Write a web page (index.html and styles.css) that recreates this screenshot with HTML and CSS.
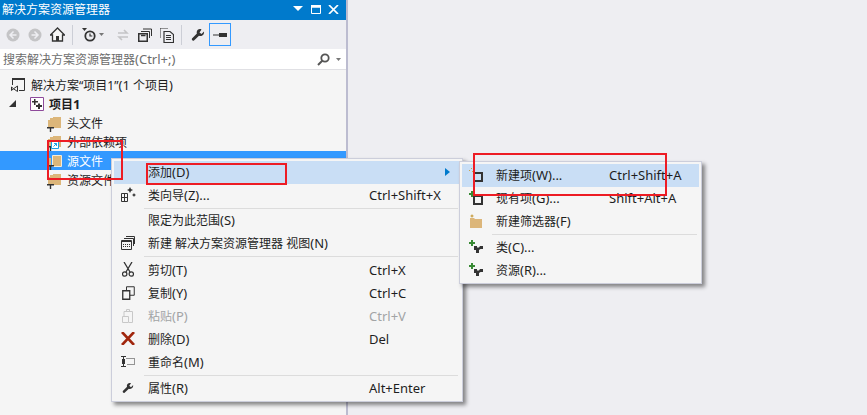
FILE: index.html
```html
<!DOCTYPE html>
<html lang="zh-CN">
<head>
    <meta charset="UTF-8">
    <title>解决方案资源管理器</title>
    <link rel="stylesheet" href="styles.css">
</head>
<body>
    <svg class="defs" width="0" height="0">
        <symbol id="folder" viewBox="0 0 14 12">
            <path d="M0 3h2V1h2v2h0V1h9v10H0z" fill="#dcb67a"/>
            <path d="M5 0h8v11H5V2z" fill="#dcb67a"/>
        </symbol>
        <symbol id="folder-open" viewBox="0 0 14 12">
            <path d="M0 3h3v8H0z" fill="#dcb67a"/>
            <path d="M4.500.5h9v11h-9z" fill="#dcb67a" stroke="#f5ecd9"/>
        </symbol>
        <symbol id="down" viewBox="0 0 7 5">
            <path d="M0 0h7v1.500H4.200V5H2.800V1.500H0z" fill="#333"/>
        </symbol>
        <symbol id="wrench" viewBox="0 0 14 14">
            <path d="M13 3.500 10.500 6 8.500 4.500 10.500 1.500C8.500.500 6 1.500 5.700 4c0 .6 0 1 .2 1.500L1 10.500c-.8 1 .8 2.800 2 2L8 7.800c2.800 1 5.500-1 5-4.300z" fill="#333"/>
        </symbol>
        <symbol id="newclass" viewBox="0 0 14 14">
            <path d="M0 2h2V0h2v2h2v2H4v2H2V4H0z" fill="#388a34"/>
            <path d="M5 6h3v1.500h2L11 6h3v3h-2.500L10 10v3H7v-3H5z" fill="#333"/>
        </symbol>
    </svg>

    <div class="page">
        <aside class="panel">
            <div class="titlebar">
                <span class="title">解决方案资源管理器</span>
                <span class="grip"></span>
                <svg class="tb-arrow" width="10" height="6" viewBox="0 0 10 6"><path d="M0 0h10L5 5z" fill="#fff"/></svg>
                <svg class="tb-max" width="10" height="9" viewBox="0 0 10 9"><path d="M.5 2h9v6.500h-9z" fill="none" stroke="#fff"/><path d="M0 0h10v2.500H0z" fill="#fff"/></svg>
                <svg class="tb-close" width="11" height="9" viewBox="0 0 11 9"><path d="M1 0l9 9M10 0 1 9" stroke="#fff" stroke-width="1.700"/></svg>
            </div>

            <div class="toolbar">
                <svg class="tool" width="14" height="14" viewBox="0 0 14 14"><circle cx="7" cy="7" r="6.500" fill="#c4c4c6"/><path d="M7.500 3.500 4 7l3.500 3.500M4 7h6.500" fill="none" stroke="#eeeef2" stroke-width="1.500"/></svg>
                <svg class="tool" width="14" height="14" viewBox="0 0 14 14"><circle cx="7" cy="7" r="6.500" fill="#c4c4c6"/><path d="M6.500 3.500 10 7l-3.500 3.500M10 7H3.500" fill="none" stroke="#eeeef2" stroke-width="1.500"/></svg>
                <svg class="tool" width="15" height="15" viewBox="0 0 15 15"><path d="M7.500 1 .5 8h2v6h10V8h2z" fill="#f6f6f6" stroke="#333" stroke-width="1.300"/><path d="M6 9h3v5H6z" fill="#333"/></svg>
                <span class="tool-sep"></span>
                <svg class="tool tool-clock" width="14" height="14" viewBox="0 0 14 14"><path d="M0 0h5L2.500 3z" fill="#333"/><circle cx="8" cy="8" r="4.700" fill="none" stroke="#333" stroke-width="1.800"/><path d="M8 5.500V8h2.300" fill="none" stroke="#333" stroke-width="1.200"/></svg>
                <svg class="tool-arrow" width="5" height="3" viewBox="0 0 5 3"><path d="M0 0h5L2.500 3z" fill="#777"/></svg>
                <svg class="tool" width="14" height="14" viewBox="0 0 14 14"><path d="M2 5h8M8 2l3 3-3 0M12 9H4M6 12 3 9h3" fill="none" stroke="#c4c4c6" stroke-width="1.600"/></svg>
                <svg class="tool" width="14" height="14" viewBox="0 0 14 14"><path d="M.75 5.750h8.500v7.500H.75z" fill="none" stroke="#333" stroke-width="1.500"/><path d="M3 7.500h4.500" stroke="#333" stroke-width="1.500"/><path d="M3 3.500h8.500V10M5 1h8.500v7" fill="none" stroke="#333"/></svg>
                <svg class="tool" width="14" height="16" viewBox="0 0 14 16"><path d="M.5 1.500h8M.5 1.500v10" fill="none" stroke="#333" stroke-dasharray="1 1"/><path d="M4 4.500h6l3.500 3v8H4z" fill="none" stroke="#333" stroke-width="1.200"/><path d="M6 8.500h5M6 10.500h5M6 12.500h5" stroke="#333"/></svg>
                <span class="tool-sep tool-sep-2"></span>
                <svg class="tool" width="14" height="14"><use href="#wrench"/></svg>
                <span class="pin">
                    <svg width="14" height="6" viewBox="0 0 14 6"><path d="M0 3h6" stroke="#333"/><path d="M6 1h8v4H6z" fill="#333"/></svg>
                </span>
            </div>

            <div class="search">
                <span class="search-text">搜索解决方案资源管理器<span class="en">(Ctrl+;)</span></span>
                <svg width="13" height="13" viewBox="0 0 13 13"><circle cx="8" cy="5" r="3.700" fill="none" stroke="#555" stroke-width="1.800"/><path d="M5.500 7.500 1 12" stroke="#555" stroke-width="2"/></svg>
                <svg class="search-arrow" width="5" height="3" viewBox="0 0 5 3"><path d="M0 0h5L2.500 3z" fill="#777"/></svg>
            </div>

            <ul class="tree">
                <li class="node node-solution">
                    <svg width="14" height="15" viewBox="0 0 14 15"><path d="M1.500 8V1.500h12v12H8" fill="none" stroke="#333"/><path d="M1 2h13" stroke="#333" stroke-width="2"/><path d="M.5 10v3.500l2-1.750zM6.500 9v5.500l-4-2.750z" fill="none" stroke="#333"/></svg>
                    <span>解决方案“项目1”<span class="en">(1</span> 个项目<span class="en">)</span></span>
                </li>
                <li class="node node-project">
                    <svg class="twist" width="7" height="7" viewBox="0 0 7 7"><path d="M7 0v7H0z" fill="#333"/></svg>
                    <svg width="14" height="14" viewBox="0 0 14 14"><path d="M.5.500h13v13H.5z" fill="#fff" stroke="#8e4a9b"/><path d="M4 2h1.500v2H8v1.500H5.500V8H4V5.500H2V4h2zM8 6.500h2V8h2v2h-2v2H8v-2H6V8h2z" fill="#333"/></svg>
                    <b>项目<span class="en">1</span></b>
                </li>
                <li class="node node-file">
                    <span class="folder"><svg width="14" height="12"><use href="#folder"/></svg><svg class="folder-mark" width="7" height="5"><use href="#down"/></svg></span>
                    <span>头文件</span>
                </li>
                <li class="node node-file">
                    <span class="folder"><svg width="14" height="12"><use href="#folder"/></svg><svg class="folder-mark" width="7" height="5"><use href="#down"/></svg><svg class="folder-link" width="8" height="8" viewBox="0 0 8 8"><path d="M.5.500h7v7h-7z" fill="#fff" stroke="#1ba1e2"/><path d="M2.500 5.500l3-3M3 2.500h2.500V5" fill="none" stroke="#1ba1e2"/></svg></span>
                    <span>外部依赖项</span>
                </li>
                <li class="node node-file node-selected">
                    <span class="folder"><svg width="14" height="12"><use href="#folder-open"/></svg><svg class="folder-mark" width="7" height="5"><use href="#down"/></svg></span>
                    <span>源文件</span>
                </li>
                <li class="node node-file">
                    <span class="folder"><svg width="14" height="12"><use href="#folder"/></svg><svg class="folder-mark" width="7" height="5"><use href="#down"/></svg></span>
                    <span>资源文件</span>
                </li>
            </ul>
        </aside>
    </div>

    <div class="menu menu-main">
        <div class="item item-on">
            <span class="item-icon"></span><span class="item-label">添加<span class="en">(D)</span></span>
            <svg class="item-more" width="5" height="8" viewBox="0 0 5 8"><path d="M0 0l5 4-5 4z" fill="#007acc"/></svg>
        </div>
        <div class="item">
            <span class="item-icon"><svg width="15" height="15" viewBox="0 0 15 15"><path d="M.5 6.500h6v8h-6zM.5 10.500h6M3.500 6.500v8" fill="none" stroke="#333"/><path d="M9 0l1 2 2 1-2 1-1 2-1-2-2-1 2-1zM13 6l.7 1.300L15 8l-1.300.7L13 10l-.7-1.300L11 8l1.300-.7z" fill="#333"/></svg></span>
            <span class="item-label">类向导<span class="en">(Z)...</span></span><span class="item-key">Ctrl+Shift+X</span>
        </div>
        <div class="sep sep-thin"></div>
        <div class="item">
            <span class="item-icon"></span><span class="item-label">限定为此范围<span class="en">(S)</span></span>
        </div>
        <div class="item">
            <span class="item-icon"><svg width="14" height="14" viewBox="0 0 14 14"><path d="M.5 4.500h10v9H.5z" fill="none" stroke="#333"/><path d="M.5 5.500h10" stroke="#333"/><path d="M2 8.500h7M2 10.500h7" stroke="#333" stroke-dasharray="1 1"/><path d="M3 2.500h9.500V10M5 .5h8.500V8" fill="none" stroke="#333"/></svg></span>
            <span class="item-label">新建 解决方案资源管理器 视图<span class="en">(N)</span></span>
        </div>
        <div class="sep sep-wide"></div>
        <div class="item">
            <span class="item-icon"><svg width="12" height="15" viewBox="0 0 12 15"><path d="M2 0l6 10M10 0 4 10" stroke="#333" stroke-width="1.300"/><circle cx="2.700" cy="12" r="2.200" fill="none" stroke="#333" stroke-width="1.200"/><circle cx="9.300" cy="12" r="2.200" fill="none" stroke="#333" stroke-width="1.200"/></svg></span>
            <span class="item-label">剪切<span class="en">(T)</span></span><span class="item-key">Ctrl+X</span>
        </div>
        <div class="item">
            <span class="item-icon"><svg width="13" height="14" viewBox="0 0 13 14"><path d="M.75 4.750h7v8.500h-7z" fill="none" stroke="#333" stroke-width="1.300"/><path d="M4.500 4.500V.75h7.750v8.500H8" fill="none" stroke="#333"/></svg></span>
            <span class="item-label">复制<span class="en">(Y)</span></span><span class="item-key">Ctrl+C</span>
        </div>
        <div class="item item-off">
            <span class="item-icon"><svg width="12" height="14" viewBox="0 0 12 14"><path d="M.5 7.500h6v6h-6zM2 7V2.500h8.500v11H7M4.500 2.500V.5h3v2" fill="none" stroke="#c8c8c8"/></svg></span>
            <span class="item-label">粘贴<span class="en">(P)</span></span><span class="item-key">Ctrl+V</span>
        </div>
        <div class="item">
            <span class="item-icon"><svg width="14" height="13" viewBox="0 0 14 13"><path d="M1 0l12 13M13 0 1 13" stroke="#a1260d" stroke-width="2.600"/></svg></span>
            <span class="item-label">删除<span class="en">(D)</span></span><span class="item-key">Del</span>
        </div>
        <div class="item">
            <span class="item-icon"><svg width="14" height="11" viewBox="0 0 14 11"><path d="M0 .5h5M0 10.500h5M2.500.5v10" stroke="#333"/><path d="M1 3h3v5H1z" fill="#333"/><path d="M5.500 2.500h8v6h-8" fill="none" stroke="#333" stroke-dasharray="1 1"/></svg></span>
            <span class="item-label">重命名<span class="en">(M)</span></span>
        </div>
        <div class="sep"></div>
        <div class="item">
            <span class="item-icon"><svg width="12" height="12" viewBox="0 0 14 14"><use href="#wrench"/></svg></span>
            <span class="item-label">属性<span class="en">(R)</span></span><span class="item-key">Alt+Enter</span>
        </div>
    </div>

    <div class="menu menu-sub">
        <div class="item item-on">
            <span class="item-icon"><svg width="14" height="14" viewBox="0 0 14 14"><path d="M2 0h1v1H2zM0 2h1v1H0zM3 3h1v1H3z" fill="#c9a24a"/><path d="M5 5h8v8H5z" fill="none" stroke="#333" stroke-width="2"/></svg></span>
            <span class="item-label">新建项<span class="en">(W)...</span></span><span class="item-key">Ctrl+Shift+A</span>
        </div>
        <div class="item">
            <span class="item-icon"><svg width="14" height="14" viewBox="0 0 14 14"><path d="M0 2h2V0h2v2h2v2H4v2H2V4H0z" fill="#388a34"/><path d="M5 5h8v8H5z" fill="none" stroke="#333" stroke-width="2"/></svg></span>
            <span class="item-label">现有项<span class="en">(G)...</span></span><span class="item-key">Shift+Alt+A</span>
        </div>
        <div class="item">
            <span class="item-icon"><svg width="14" height="14" viewBox="0 0 14 14"><path d="M1 4h4l1 1h7v9H1z" fill="#dcb67a"/><path d="M3 0l.7 1.300L5 2l-1.300.7L3 4l-.7-1.300L1 2l1.300-.7z" fill="#c9a24a"/></svg></span>
            <span class="item-label">新建筛选器<span class="en">(F)</span></span>
        </div>
        <div class="sep"></div>
        <div class="item">
            <span class="item-icon"><svg width="14" height="14"><use href="#newclass"/></svg></span>
            <span class="item-label">类<span class="en">(C)...</span></span>
        </div>
        <div class="item">
            <span class="item-icon"><svg width="14" height="14"><use href="#newclass"/></svg></span>
            <span class="item-label">资源<span class="en">(R)...</span></span>
        </div>
    </div>

    <div class="mark mark-file"></div>
    <div class="mark mark-add"></div>
    <div class="mark mark-new"></div>
</body>
</html>
```

FILE: styles.css
```css
* {
    box-sizing: border-box;
}
html, body {
    margin: 0;
    padding: 0;
    height: 100%;
    overflow: hidden;
}
body {
    position: relative;
    background-color: #eeeef2;
    color: #1e1e1e;
    font-family: "Noto Sans", "Noto Sans CJK SC", sans-serif;
    font-size: 12px;
}
svg {
    display: block;
    flex: none;
}
.defs {
    position: absolute;
}
.en {
    font-size: 13px;
}
.page {
    display: flex;
    height: 100%;
}

/* panel */
.panel {
    display: flex;
    flex-direction: column;
    width: 348px;
    height: 100%;
    background-color: #f5f5f5;
    border-right: 2px solid #bcbcd0;
}
.titlebar {
    display: flex;
    align-items: center;
    height: 20px;
    padding: 0 7px 2px 2px;
    background-color: #007acc;
    color: #fff;
}
.title {
    padding-top: 2px;
    line-height: 18px;
}
.grip {
    flex: 1;
    height: 5px;
    margin: 0 0 0 9px;
    background-image: radial-gradient(circle, #5aa9de 0.6px, transparent 0.7px);
    background-size: 4px 2px;
}
.tb-arrow {
    margin-left: 3px;
}
.tb-max {
    margin-left: 8px;
}
.tb-close {
    margin-left: 7px;
}
.toolbar {
    display: flex;
    align-items: center;
    height: 29px;
    padding: 0 0 0 6px;
    background-color: #eeeef2;
}
.tool {
    margin-right: 8px;
}
.tool-sep {
    width: 1px;
    height: 20px;
    margin: 0 9px 0 -1px;
    background-color: #ccced6;
}
.tool-sep-2 {
    margin: 0 9px 0 -1px;
}
.tool-clock {
    margin-right: 3px;
}
.tool-arrow {
    margin-right: 12px;
}
.pin {
    display: flex;
    align-items: center;
    justify-content: center;
    width: 22px;
    height: 23px;
    margin-left: -4px;
    border: 1px solid #3399ff;
}
.search {
    display: flex;
    align-items: center;
    height: 21px;
    padding: 0 5px 0 3px;
    background-color: #fff;
    border-bottom: 1px solid #e0e0e4;
}
.search-text {
    flex: 1;
    color: #6d6d6d;
}
.search-arrow {
    margin-left: 6px;
}

/* tree */
.tree {
    list-style-type: none;
    margin: 0;
    padding: 5px 0 0;
}
.node {
    display: flex;
    align-items: center;
    height: 19px;
    color: #1e1e1e;
}
.node-solution {
    gap: 6px;
    padding-left: 11px;
}
.node-project {
    padding-left: 9px;
}
.node-project b {
    margin-left: 5px;
}
.twist {
    margin-right: 14px;
}
.node-file {
    gap: 5px;
    padding-left: 48px;
}
.node-selected {
    background-color: #3399ff;
    color: #fff;
}
.folder {
    position: relative;
    display: block;
    width: 14px;
    height: 12px;
}
.folder-mark {
    position: absolute;
    left: -1px;
    bottom: -3px;
}
.folder-link {
    position: absolute;
    left: 3px;
    bottom: -1px;
}

/* context menus */
.menu {
    position: absolute;
    padding: 2px;
    background-color: #f5f5f5;
    border: 1px solid #cccedb;
    box-shadow: 3px 3px 4px rgba(0, 0, 0, 0.45);
}
.menu-main {
    left: 111px;
    top: 158px;
    width: 352px;
    padding-bottom: 1px;
}
.menu-sub {
    left: 459px;
    top: 161px;
    width: 243px;
    padding-bottom: 1px;
}
.item {
    display: flex;
    align-items: center;
    height: 23px;
    padding-bottom: 2px;
    color: #1e1e1e;
}
.item-on {
    background-color: #c9def5;
}
.item-off {
    color: #a2a4a5;
}
.item-icon {
    display: flex;
    align-items: center;
    justify-content: center;
    width: 28px;
    margin-right: 6px;
}
.item-label {
    flex: 1;
}
.item-key {
    width: 91px;
    font-size: 13px;
    white-space: nowrap;
}
.item-more {
    margin-right: 10px;
}
.menu-sub .item-key {
    width: 90px;
}
.sep {
    height: 1px;
    margin: 1px 2px 1px 30px;
    background-color: #dcdcdc;
}
.sep-thin {
    margin-bottom: 0;
}
.sep-wide {
    margin-bottom: 2px;
}

/* red annotation frames */
.mark {
    position: absolute;
    border: 2px solid #ed1c24;
}
.mark-file {
    left: 47px;
    top: 140px;
    width: 76px;
    height: 40px;
}
.mark-add {
    left: 146px;
    top: 163px;
    width: 141px;
    height: 22px;
}
.mark-new {
    left: 473px;
    top: 153px;
    width: 194px;
    height: 43px;
}
```
